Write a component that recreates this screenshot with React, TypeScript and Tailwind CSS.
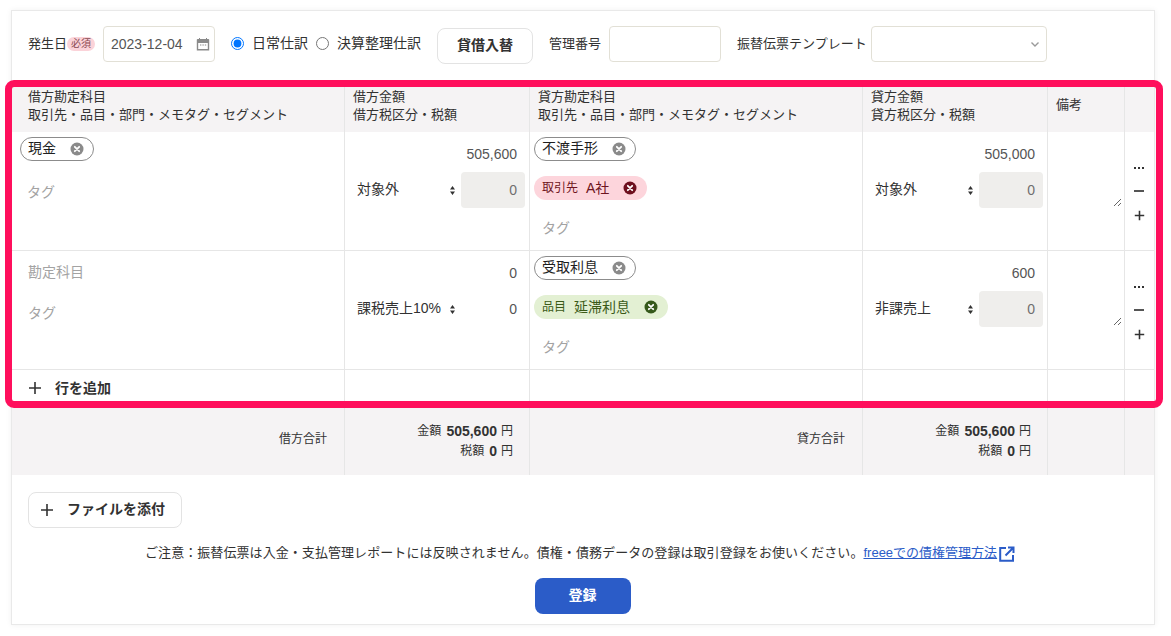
import React from "react";

const fontStack = "font-['Liberation_Sans','Noto_Sans_CJK_JP',sans-serif]";

function ClearIcon({ fill, cross = "#ffffff" }: { fill: string; cross?: string }) {
  return (
    <svg width="14" height="14" viewBox="0 0 14 14" className="shrink-0">
      <circle cx="7" cy="7" r="6.5" fill={fill} />
      <path d="M4.8 4.8l4.4 4.4M9.2 4.8l-4.4 4.4" stroke={cross} strokeWidth="1.8" strokeLinecap="round" />
    </svg>
  );
}

function Plus({ size = 14, stroke = 1.6 }: { size?: number; stroke?: number }) {
  return (
    <svg width={size} height={size} viewBox="0 0 14 14" className="shrink-0">
      <path d="M7 1v12M1 7h12" stroke="#323232" strokeWidth={stroke} />
    </svg>
  );
}

function UpDown() {
  return (
    <svg width="5" height="9" viewBox="0 0 5 9" className="shrink-0">
      <path d="M2.5 0L5 3.4H0zM2.5 9L0 5.6h5z" fill="#323232" />
    </svg>
  );
}

function AccountPill({ label, width }: { label: string; width: string }) {
  return (
    <div className={`flex h-[24px] items-center justify-between rounded-full border border-[#8c8c8c] pl-[7px] pr-[9px] text-[14px] text-[#1e1e1e] ${width}`}>
      <span className="mb-[2px]">{label}</span>
      <ClearIcon fill="#8a8a8a" />
    </div>
  );
}

function TagPill({ kind, name, tone }: { kind: string; name: string; tone: "red" | "green" }) {
  const cls =
    tone === "red"
      ? "bg-[#fdd5dc] text-[#6e1420]"
      : "bg-[#e3f0d3] text-[#3b5a17]";
  return (
    <div className={`flex h-[24px] w-fit items-center rounded-full pl-[8px] pr-[10px] text-[14px] ${cls}`}>
      <span className="text-[12px]">{kind}</span>
      <span className="ml-[8px]">{name}</span>
      <span className="ml-[14px]">
        <ClearIcon fill={tone === "red" ? "#6e0f1e" : "#35591a"} />
      </span>
    </div>
  );
}

function Placeholder({ children, className = "" }: { children: React.ReactNode; className?: string }) {
  return <div className={`text-[14px] leading-[20px] text-[#a3a3a3] ${className}`}>{children}</div>;
}

function AmountCell({ amount, tax, disabled = true }: { amount: string; tax: string; disabled?: boolean }) {
  return (
    <div className="border-r border-b border-[#e6e6e6] pt-[10px] pl-[12px] pr-[4px]">
      <div className="flex h-[24px] items-center justify-end pr-[8px] text-[14px] text-[#555555]">{amount}</div>
      <div className="mt-[6px] flex h-[36px] items-center">
        <div className="flex w-[104px] items-center justify-between pr-[6px] text-[14px] text-[#323232]">
          <span className="mb-[2px]">{tax}</span>
          <UpDown />
        </div>
        <div className={`flex h-full w-[64px] items-center justify-end rounded-[4px] pr-[8px] text-[14px] ${disabled ? "bg-[#efeeec] text-[#6f6f6f]" : "text-[#555555]"}`}>
          0
        </div>
      </div>
    </div>
  );
}

function RemarkCell() {
  return (
    <div className="flex border-r border-b border-[#e6e6e6] pt-[4px] pl-[2px]">
      <textarea className="h-[71px] w-[72px] resize bg-transparent outline-none" aria-label="備考" />
    </div>
  );
}

function ActionCell() {
  return (
    <div className="flex flex-col items-center border-b border-[#e6e6e6] pr-[1px] pt-[31px]">
      <div className="flex h-[10px] items-center gap-[1.5px]">
        <span className="h-[2.5px] w-[2.5px] bg-[#323232]" />
        <span className="h-[2.5px] w-[2.5px] bg-[#323232]" />
        <span className="h-[2.5px] w-[2.5px] bg-[#323232]" />
      </div>
      <div className="mt-[13px] flex h-[10px] items-center">
        <span className="h-[1.5px] w-[10px] bg-[#555555]" />
      </div>
      <div className="mt-[14px]">
        <Plus size={11} stroke={2} />
      </div>
    </div>
  );
}

function HeaderCell({ first, second, className = "" }: { first: string; second?: string; className?: string }) {
  return (
    <div className={`border-r border-[#e6e6e6] bg-[#f5f3f4] text-[13px] leading-[18px] text-[#323232] ${className}`}>
      <div>{first}</div>
      {second && <div>{second}</div>}
    </div>
  );
}

function TotalLabel({ children }: { children: React.ReactNode }) {
  return (
    <div className="flex items-center justify-end border-r border-[#e6e6e6] bg-[#f5f3f4] pb-[4px] pr-[17px] text-[12px] text-[#323232]">
      {children}
    </div>
  );
}

function TotalAmount({ amount }: { amount: string }) {
  return (
    <div className="flex flex-col items-end justify-center border-r border-[#e6e6e6] bg-[#f5f3f4] pr-[16px] text-[12px] text-[#323232]">
      <div className="flex h-[20px] items-center gap-[4px]">
        <span className="mr-[1px]">金額</span>
        <b className="text-[14px]">{amount}</b>
        <span>円</span>
      </div>
      <div className="flex h-[20px] items-center gap-[4px]">
        <span className="mr-[1px]">税額</span>
        <b className="text-[14px]">0</b>
        <span>円</span>
      </div>
    </div>
  );
}

export default function App() {
  return (
    <div className={`relative h-[636px] w-[1171px] overflow-hidden bg-white ${fontStack}`}>
      <div className="ml-[11px] mt-[10px] h-[615px] w-[1144px] border border-[#e9e9e9] bg-white shadow-[0_0_6px_rgba(0,0,0,0.06)]">
        {/* top form */}
        <div className="flex h-[76px] items-start pl-[16px] pt-[15px] text-[13px] text-[#323232]">
          <div className="flex h-[36px] items-center">
            <span>発生日</span>
            <span className="w-[28px] rounded-[7px] bg-[#fbd3d9] text-center text-[10px] leading-[14px] text-[#8a4a52]">必須</span>
          </div>
          <div className="ml-[8px] flex h-[36px] w-[112px] items-center justify-between rounded-[4px] border border-[#e2e0d6] pl-[7px] pr-[4px]">
            <span className="text-[14px] text-[#555555]">2023-12-04</span>
            <svg width="14" height="14" viewBox="0 0 14 14">
              <path d="M1.5 3.2h11v9.6h-11z" fill="none" stroke="#8a8a8a" strokeWidth="1.4" />
              <path d="M1.5 2.5h11v3h-11zM3.5 1v2M10.5 1v2" fill="#8a8a8a" stroke="#8a8a8a" strokeWidth="1" />
              <path d="M4 8h1.4M6.4 8h1.4M8.8 8h1.4" stroke="#8a8a8a" strokeWidth="1.2" />
            </svg>
          </div>
          <label className="ml-[16px] flex h-[34px] items-center text-[14px]">
            <input type="radio" name="kind" defaultChecked className="m-0 h-[13px] w-[13px]" />
            <span className="ml-[8px]">日常仕訳</span>
          </label>
          <label className="ml-[8px] flex h-[34px] items-center text-[14px]">
            <input type="radio" name="kind" className="m-0 h-[13px] w-[13px]" />
            <span className="ml-[8px]">決算整理仕訳</span>
          </label>
          <button className="ml-[16px] mt-[2px] h-[36px] w-[96px] rounded-[8px] border border-[#e3e3e3] bg-white pb-[2px] text-[14px] font-bold text-[#323232]">
            貸借入替
          </button>
          <div className="ml-[16px] flex h-[36px] items-center">管理番号</div>
          <div className="ml-[8px] h-[36px] w-[112px] rounded-[4px] border border-[#e2e0d6]" />
          <div className="ml-[16px] flex h-[36px] items-center">振替伝票テンプレート</div>
          <div className="ml-[4px] flex h-[36px] w-[176px] items-center justify-end rounded-[4px] border border-[#e2e0d6] pr-[6px]">
            <svg width="10" height="7" viewBox="0 0 10 7">
              <path d="M1.5 1.5L5 5l3.5-3.5" fill="none" stroke="#9a9a9a" strokeWidth="1.4" />
            </svg>
          </div>
        </div>

        {/* journal table */}
        <div className="grid grid-cols-[333px_185px_333px_185px_77px_29px] grid-rows-[45px_119px_119px_37px_68px]">
          <HeaderCell first="借方勘定科目" second="取引先・品目・部門・メモタグ・セグメント" className="pl-[16px] pt-[1px]" />
          <HeaderCell first="借方金額" second="借方税区分・税額" className="pl-[8px] pt-[1px]" />
          <HeaderCell first="貸方勘定科目" second="取引先・品目・部門・メモタグ・セグメント" className="pl-[8px] pt-[1px]" />
          <HeaderCell first="貸方金額" second="貸方税区分・税額" className="pl-[8px] pt-[1px]" />
          <HeaderCell first="備考" className="pl-[8px] pt-[9px]" />
          <div className="bg-[#f5f3f4]" />

          {/* row 1 */}
          <div className="border-r border-b border-[#e6e6e6] pl-[8px] pt-[5px]">
            <AccountPill label="現金" width="w-[74px]" />
            <Placeholder className="ml-[7px] mt-[21px]">タグ</Placeholder>
          </div>
          <AmountCell amount="505,600" tax="対象外" />
          <div className="border-r border-b border-[#e6e6e6] pl-[4px] pt-[5px]">
            <AccountPill label="不渡手形" width="w-[102px]" />
            <div className="mt-[15px]">
              <TagPill kind="取引先" name="A社" tone="red" />
            </div>
            <Placeholder className="ml-[8px] mt-[18px]">タグ</Placeholder>
          </div>
          <AmountCell amount="505,000" tax="対象外" />
          <RemarkCell />
          <ActionCell />

          {/* row 2 */}
          <div className="border-r border-b border-[#e6e6e6] pl-[16px] pt-[11px]">
            <Placeholder>勘定科目</Placeholder>
            <Placeholder className="mt-[21px]">タグ</Placeholder>
          </div>
          <AmountCell amount="0" tax="課税売上10%" disabled={false} />
          <div className="border-r border-b border-[#e6e6e6] pl-[4px] pt-[5px]">
            <AccountPill label="受取利息" width="w-[102px]" />
            <div className="mt-[15px]">
              <TagPill kind="品目" name="延滞利息" tone="green" />
            </div>
            <Placeholder className="ml-[8px] mt-[18px]">タグ</Placeholder>
          </div>
          <AmountCell amount="600" tax="非課売上" />
          <RemarkCell />
          <ActionCell />

          {/* add row */}
          <div className="flex items-start gap-[13px] border-r border-[#e6e6e6] pl-[16px] pt-[9px] text-[14px] font-bold leading-[18px] text-[#323232]">
            <span className="mt-[2px]">
              <Plus />
            </span>
            行を追加
          </div>
          <div className="border-r border-[#e6e6e6]" />
          <div className="border-r border-[#e6e6e6]" />
          <div className="border-r border-[#e6e6e6]" />
          <div className="border-r border-[#e6e6e6]" />
          <div />

          {/* totals */}
          <TotalLabel>借方合計</TotalLabel>
          <TotalAmount amount="505,600" />
          <TotalLabel>貸方合計</TotalLabel>
          <TotalAmount amount="505,600" />
          <div className="border-r border-[#e6e6e6] bg-[#f5f3f4]" />
          <div className="bg-[#f5f3f4]" />
        </div>

        {/* attachments and submit */}
        <div className="pl-[16px] pt-[17px]">
          <button className="flex h-[36px] w-[154px] items-center gap-[13px] rounded-[8px] border border-[#e3e3e3] bg-white pb-[1px] pl-[11px] text-[14px] font-bold text-[#323232]">
            <Plus />
            ファイルを添付
          </button>
        </div>
        <div className="mt-[16px] flex h-[18px] items-center pl-[133px] text-[13px] text-[#323232]">
          <span className="tracking-[0.07px]">ご注意：振替伝票は入金・支払管理レポートには反映されません。債権・債務データの登録は取引登録をお使いください。</span>
          <a href="#" className="text-[#2b5cc8] underline">freeeでの債権管理方法</a>
          <svg width="16" height="16" viewBox="0 0 16 16" className="ml-[2px] mt-[2px]">
            <path d="M7 2H1.2v12.8H14V9" fill="none" stroke="#2b5cc8" strokeWidth="2" />
            <path d="M6.5 9.5L14 2M9 1.5h5.5V7" fill="none" stroke="#2b5cc8" strokeWidth="2" />
          </svg>
        </div>
        <div className="mt-[16px] flex justify-center">
          <button className="h-[36px] w-[96px] rounded-[8px] bg-[#2b5cc8] pb-[2px] pr-[1px] text-[14px] font-bold text-white">登録</button>
        </div>
      </div>

      {/* highlight frame over the journal rows */}
      <div className="pointer-events-none absolute left-[5px] top-[80px] h-[328px] w-[1158px] rounded-[9px] border-[7px] border-[#ff0f5c]" />
    </div>
  );
}
